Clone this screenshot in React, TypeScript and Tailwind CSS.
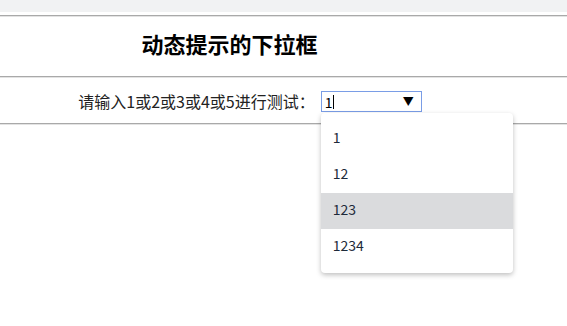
import { useState } from "react";

const options = ["1", "12", "123", "1234"];

export default function App() {
  const [value] = useState("1");
  const active = "123";

  return (
    <div className="w-[567px] h-[326px] bg-white text-[#111] font-['Noto_Sans_CJK_SC',sans-serif] overflow-hidden">
      {/* top band */}
      <div className="h-[12px] bg-[#f1f2f3]" />
      <div className="h-[3px]" />
      <div className="border-t border-t-[#a9a9a9] border-b border-b-[#e3e3e3]" />

      {/* title */}
      <div className="h-[59px] flex items-center justify-center pr-[108px]">
        <h1 className="text-[22px] font-bold leading-none -mt-[8px] text-black">动态提示的下拉框</h1>
      </div>
      <div className="border-t border-t-[#a9a9a9] border-b border-b-[#e3e3e3]" />

      {/* input row */}
      <div className="h-[45px] flex items-start justify-center pr-[67px] pt-[13px]">
        <label className="text-[16px] leading-[20px] mr-[6px] text-[#222]">请输入1或2或3或4或5进行测试：</label>
        <div className="relative">
          <div className="w-[101px] h-[21px] border border-[#7a9de6] flex items-center pl-[3px] pr-[7px] bg-white">
            <span className="text-[14px] leading-none text-black">{value}</span>
            <span className="w-px h-[14px] bg-black ml-px" />
            <span className="ml-auto text-[11px] leading-none text-black">▼</span>
          </div>

          {/* suggestions */}
          <ul className="absolute left-0 top-[22px] w-[192px] bg-white rounded-[4px] py-[8px] shadow-[0_2px_5px_rgba(0,0,0,0.25)] z-10">
            {options.map((o) => (
              <li
                key={o}
                className={`h-[36px] flex items-center pl-[12px] pb-[3px] text-[14px] text-[#1d2a3a] ${
                  o === active ? "bg-[#dadbdd]" : ""
                }`}
              >
                {o}
              </li>
            ))}
          </ul>
        </div>
      </div>
      <div className="border-t border-t-[#a9a9a9] border-b border-b-[#e3e3e3]" />
    </div>
  );
}
